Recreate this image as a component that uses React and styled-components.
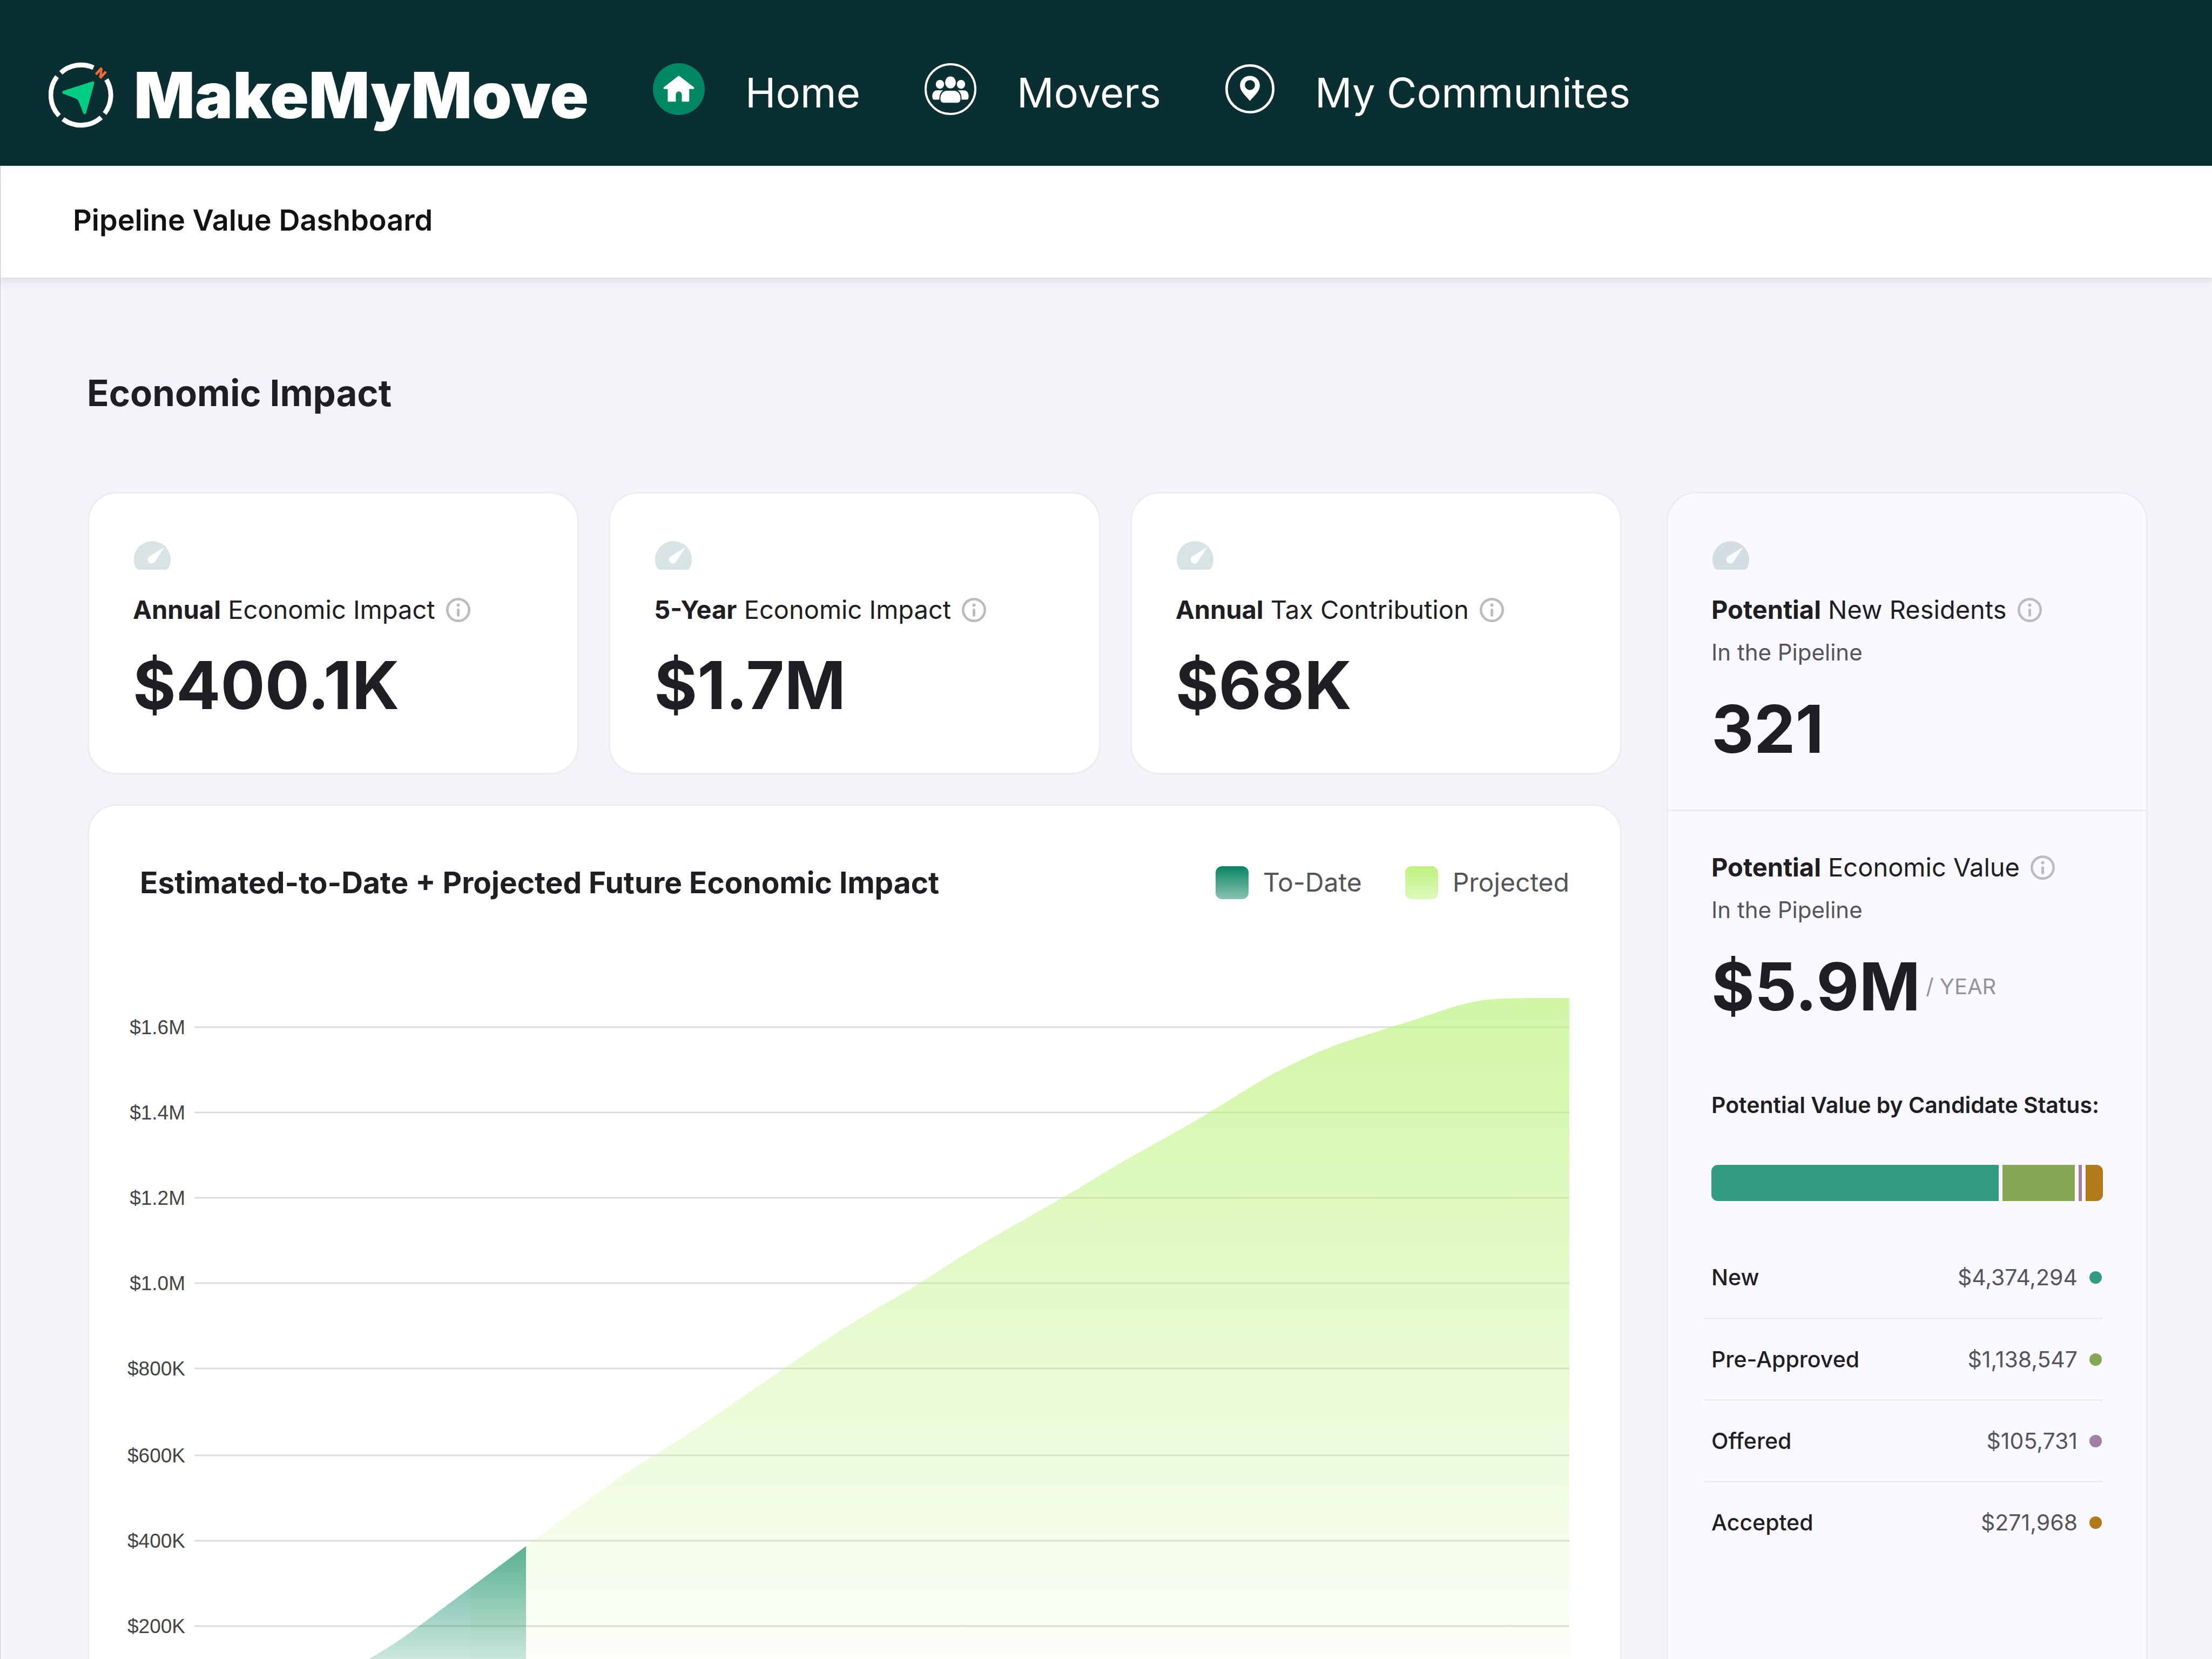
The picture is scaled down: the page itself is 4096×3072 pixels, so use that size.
import React from 'react'
import styled, { createGlobalStyle } from 'styled-components'

const stats = [
  { lead: 'Annual', label: 'Economic Impact', value: '$400.1K' },
  { lead: '5-Year', label: 'Economic Impact', value: '$1.7M' },
  { lead: 'Annual', label: 'Tax Contribution', value: '$68K' },
]

const statuses = [
  { name: 'New', value: '$4,374,294', color: '#329c82', share: 532 },
  { name: 'Pre-Approved', value: '$1,138,547', color: '#86a757', share: 134 },
  { name: 'Offered', value: '$105,731', color: '#a27fa4', share: 6 },
  { name: 'Accepted', value: '$271,968', color: '#b07a18', share: 32 },
]

const ticks = [
  { label: '$1.6M', y: 102 },
  { label: '$1.4M', y: 260 },
  { label: '$1.2M', y: 418 },
  { label: '$1.0M', y: 576 },
  { label: '$800K', y: 734 },
  { label: '$600K', y: 895 },
  { label: '$400K', y: 1053 },
  { label: '$200K', y: 1211 },
]

const LogoMark = () => (
  <LogoSvg viewBox="52 76 546 554" aria-hidden="true">
    <g fill="none" stroke="#fff" strokeWidth="40">
      <path d="M155 165A254 254 0 0 1 430 122" />
      <path d="M539 222A254 254 0 0 1 524 508" />
      <path d="M495 542A254 254 0 0 1 173 556" />
      <path d="M140 527A254 254 0 0 1 123 198" />
    </g>
    <path
      fill="#00ce84"
      d="M420 239L175 318Q160 328 172 341L282 383Q297 389 304 403L344 507Q355 523 367 507L437 252Q439 235 420 239Z"
    />
    <text
      x="491"
      y="204"
      fontFamily="Inter, sans-serif"
      fontSize="100"
      fontWeight="900"
      textAnchor="middle"
      fill="#ff6a35"
      transform="rotate(42 491 168)"
    >
      N
    </text>
  </LogoSvg>
)

const HomeIcon = () => (
  <NavSvg viewBox="0 0 147 147" aria-hidden="true">
    <circle cx="73.5" cy="73.5" r="73.5" fill="#008763" />
    <path
      fill="#fff"
      d="M71 37Q73.500 35 76 37L116 68Q119 73 114 73H103V107Q103 109 101 109H82V89A8.500 9 0 0 0 65 89V109H44Q42 109 42 107V73H33Q28 73 31 68Z"
    />
  </NavSvg>
)

const MoversIcon = () => (
  <NavSvg viewBox="0 0 147 147" aria-hidden="true">
    <circle cx="73.5" cy="73.5" r="70.5" fill="none" stroke="#fff" strokeWidth="6" />
    <g fill="#fff">
      <ellipse cx="73.5" cy="54.700" rx="15.300" ry="17" />
      <ellipse cx="43.600" cy="60" rx="11.800" ry="12.700" />
      <ellipse cx="103.400" cy="60" rx="11.800" ry="12.700" />
      <path d="M64 78H83C95 78 102 88 102 100C102 108 99 112 93 112H54C48 112 45 108 45 100C45 88 52 78 64 78Z" />
      <path d="M36 77H53C45 82 42 91 42 103.500H28C24 103.500 22 100 22 94C22 84 27 77 36 77Z" />
      <path d="M111 77H94C102 82 105 91 105 103.500H119C123 103.500 125 100 125 94C125 84 120 77 111 77Z" />
    </g>
  </NavSvg>
)

const PinIcon = () => (
  <PinSvg viewBox="0 0 139 139" aria-hidden="true">
    <circle cx="69.5" cy="69.5" r="66" fill="none" stroke="#fff" strokeWidth="7" />
    <path
      fill="#fff"
      fillRule="evenodd"
      d="M69.500 33C85 33 97.500 44 97.500 60C97.500 77 83 87 69.500 104C56 87 41.500 77 41.500 60C41.500 44 54 33 69.500 33ZM69.500 44.500A14.200 14.200 0 1 0 69.500 73A14.200 14.200 0 1 0 69.500 44.500Z"
    />
  </PinSvg>
)

const Gauge = ({ color }) => (
  <GaugeSvg viewBox="0 0 103 80" aria-hidden="true">
    <path
      fill={color}
      fillRule="evenodd"
      d="M15 80Q9 80 6.200 76A51.500 51.500 0 1 1 96.800 76Q94 80 88 80ZM86 16.500L43 43A11 11 0 1 0 60 56Z"
    />
  </GaugeSvg>
)

const Info = () => (
  <InfoButton type="button" aria-label="More info">
    <svg viewBox="0 0 68 68" aria-hidden="true">
      <circle cx="34" cy="34" r="30.5" fill="none" stroke="#bcbbc0" strokeWidth="7" />
      <circle cx="34" cy="20.5" r="4.500" fill="#bcbbc0" />
      <path d="M34 34V49" stroke="#bcbbc0" strokeWidth="7.500" strokeLinecap="round" />
    </svg>
  </InfoButton>
)

const Label = ({ lead, children }) => (
  <LabelRow>
    <span>
      <b>{lead}</b> {children}
    </span>
    <Info />
  </LabelRow>
)

const Chart = () => (
  <ChartSvg viewBox="0 0 2672 1380" role="img" aria-label="Economic impact">
    <defs>
      <linearGradient id="projected" gradientUnits="userSpaceOnUse" x1="0" y1="48" x2="0" y2="1369">
        <stop offset="0" stopColor="#bef280" stopOpacity="0.71" />
        <stop offset="1" stopColor="#bef280" stopOpacity="0" />
      </linearGradient>
      <linearGradient id="todate" gradientUnits="userSpaceOnUse" x1="0" y1="1063" x2="0" y2="1369">
        <stop offset="0" stopColor="#008661" stopOpacity="0.64" />
        <stop offset="1" stopColor="#008661" stopOpacity="0" />
      </linearGradient>
    </defs>
    {ticks.map((tick) => (
      <g key={tick.label}>
        <TickText x="108" y={tick.y + 13} textAnchor="end">
          {tick.label}
        </TickText>
        <path d={`M125 ${tick.y}H2671`} stroke="#dcdcdc" strokeWidth="3" />
      </g>
    ))}
    <path
      fill="url(#projected)"
      d="M636 1140L739 1063L872 965C900 944 922 928 945 914C985 889 1015 872 1055 845L1217 734C1262 703 1285 687 1332 657C1380 627 1415 609 1466 577C1510 549 1545 526 1594 497C1645 467 1685 445 1734 417C1780 391 1810 370 1860 342C1910 314 1955 290 2004 260C2062 226 2100 197 2174 163C2205 148 2225 140 2256 129L2340 102C2375 92 2400 83 2430 73C2470 60 2490 54 2530 50C2560 48 2590 48 2671 48V1369H636Z"
    />
    <path
      fill="url(#todate)"
      d="M300 1369C380 1310 420 1288 450 1271C490 1248 515 1230 541 1211L636 1140L739 1063V1369Z"
    />
  </ChartSvg>
)

const App = () => {
  return (
    <Page>
      <GlobalStyle />
      <Header>
        <Logo href="#">
          <LogoMark />
          <Wordmark>MakeMyMove</Wordmark>
        </Logo>
        <Nav>
          <NavLink href="#">
            <HomeIcon />
            <NavText>Home</NavText>
          </NavLink>
          <NavLink href="#">
            <MoversIcon />
            <NavText>Movers</NavText>
          </NavLink>
          <NavLink href="#">
            <PinIcon />
            <NavText>My Communites</NavText>
          </NavLink>
        </Nav>
      </Header>
      <Body>
        <SubBar>
          <SubTitle>Pipeline Value Dashboard</SubTitle>
        </SubBar>
        <Heading>Economic Impact</Heading>
        <Content>
          <Main>
            <StatGrid>
              {stats.map((stat) => (
                <StatCard key={stat.value}>
                  <Gauge color="#d8e3e3" />
                  <Label lead={stat.lead}>{stat.label}</Label>
                  <Value>{stat.value}</Value>
                </StatCard>
              ))}
            </StatGrid>
            <ChartCard>
              <ChartHead>
                <ChartTitle>Estimated-to-Date + Projected Future Economic Impact</ChartTitle>
                <Legend>
                  <LegendItem>
                    <Swatch $from="#068562" $to="#8cc3b1" />
                    To-Date
                  </LegendItem>
                  <LegendItem>
                    <Swatch $from="#bdf27c" $to="#def8be" />
                    Projected
                  </LegendItem>
                </Legend>
              </ChartHead>
              <Chart />
            </ChartCard>
          </Main>
          <Side>
            <SideTop>
              <Gauge color="#d2dee3" />
              <Label lead="Potential">New Residents</Label>
              <Sub>In the Pipeline</Sub>
              <SideValue>321</SideValue>
            </SideTop>
            <SideBottom>
              <Label lead="Potential">Economic Value</Label>
              <Sub>In the Pipeline</Sub>
              <SideValue>
                $5.9M <Unit>/ YEAR</Unit>
              </SideValue>
              <StatusTitle>Potential Value by Candidate Status:</StatusTitle>
              <Bar>
                {statuses.map((status) => (
                  <Segment key={status.name} $color={status.color} $share={status.share} />
                ))}
              </Bar>
              <StatusTable>
                <tbody>
                  {statuses.map((status) => (
                    <StatusRow key={status.name}>
                      <th scope="row">{status.name}</th>
                      <td>
                        {status.value}
                        <Dot $color={status.color} />
                      </td>
                    </StatusRow>
                  ))}
                </tbody>
              </StatusTable>
            </SideBottom>
          </Side>
        </Content>
      </Body>
    </Page>
  )
}

export default App

const GlobalStyle = createGlobalStyle`
  * {
    box-sizing: border-box;
  }
  body {
    margin: 0;
    font-family: Inter, "Liberation Sans", sans-serif;
    color: #1f1e23;
    background: #f4f3f8;
  }
  h1, h2, h3, p {
    margin: 0;
  }
`

const Page = styled.div`
  display: flex;
  flex-direction: column;
  height: 100vh;
  overflow: hidden;
`

const Header = styled.header`
  display: flex;
  align-items: center;
  flex: none;
  gap: 119px;
  height: 307px;
  padding: 22px 90px 0;
  background: #0a2f32;
`

const Logo = styled.a`
  display: flex;
  align-items: center;
  gap: 38px;
  margin-top: 22px;
  color: #fff;
  text-decoration: none;
`

const LogoSvg = styled.svg`
  width: 120px;
  height: 122px;
`

const Wordmark = styled.span`
  font-size: 118px;
  font-weight: 900;
  line-height: 120px;
`

const Nav = styled.nav`
  display: flex;
  align-items: center;
  gap: 119px;
`

const NavLink = styled.a`
  display: flex;
  align-items: center;
  gap: 75px;
  color: #fff;
  text-decoration: none;
`

const NavSvg = styled.svg`
  width: 96px;
  height: 96px;
`

const PinSvg = styled(NavSvg)`
  width: 91px;
  height: 91px;
`

const NavText = styled.span`
  padding-top: 12px;
  font-size: 76px;
  font-weight: 400;
  line-height: 96px;
`

const Body = styled.div`
  flex: 1;
  min-height: 0;
  border-left: 1px solid #c4c8cb;
`

const SubBar = styled.div`
  display: flex;
  align-items: center;
  height: 207px;
  padding: 0 134px 6px;
  background: #fff;
  box-shadow: 0 4px 16px rgba(20, 20, 40, 0.14);
`

const SubTitle = styled.h1`
  font-size: 54px;
  font-weight: 600;
  line-height: 64px;
  color: #111;
`

const Heading = styled.h2`
  padding: 172px 160px 141px;
  font-size: 67px;
  font-weight: 700;
  line-height: 84px;
`

const Content = styled.div`
  display: grid;
  grid-template-columns: minmax(0, 1fr) 891px;
  gap: 83px;
  padding: 0 119px 0 161px;
`

const Main = styled.main`
  display: flex;
  flex-direction: column;
  gap: 55px;
`

const StatGrid = styled.div`
  display: grid;
  grid-template-columns: repeat(3, 1fr);
  gap: 55px;
`

const Card = styled.section`
  background: #fff;
  border: 3px solid #edecf1;
  border-radius: 54px;
`

const StatCard = styled(Card)`
  padding: 88px 81px;
`

const GaugeSvg = styled.svg`
  display: block;
  width: 68px;
  height: 53px;
  margin-bottom: 44px;
  margin-left: 2px;
`

const LabelRow = styled.div`
  display: flex;
  align-items: center;
  gap: 20px;
  font-size: 47px;
  line-height: 60px;
  white-space: nowrap;
`

const InfoButton = styled.button`
  display: block;
  width: 45px;
  height: 45px;
  padding: 0;
  border: 0;
  background: none;

  svg {
    display: block;
  }
`

const Value = styled.p`
  margin-top: 36px;
  font-size: 122px;
  font-weight: 700;
  line-height: 148px;
`

const ChartCard = styled(Card)`
  padding-top: 110px;
`

const ChartHead = styled.div`
  display: flex;
  align-items: center;
  justify-content: space-between;
  padding: 0 94px;
`

const ChartTitle = styled.h3`
  font-size: 55px;
  font-weight: 700;
  line-height: 64px;
`

const Legend = styled.div`
  display: flex;
  gap: 80px;
`

const LegendItem = styled.div`
  display: flex;
  align-items: center;
  gap: 27px;
  font-size: 48px;
  line-height: 60px;
  color: #55545a;
`

const Swatch = styled.span`
  width: 61px;
  height: 61px;
  border-radius: 12px;
  background: linear-gradient(${(p) => p.$from}, ${(p) => p.$to});
`

const ChartSvg = styled.svg`
  display: block;
  width: 100%;
  margin-top: 134px;
  padding: 0 93px 0 70px;
`

const TickText = styled.text`
  font-family: "Liberation Sans", Arial, sans-serif;
  font-size: 37px;
  fill: #444;
`

const Side = styled.aside`
  border: 3px solid #edecf1;
  border-radius: 54px;
  background: #faf9ff;
`

const SideTop = styled.section`
  padding: 88px 80px 75px;
  border-bottom: 3px solid #edecf1;
`

const SideBottom = styled.section`
  padding: 74px 80px;
`

const Sub = styled.p`
  margin-top: 25px;
  font-size: 42px;
  line-height: 48px;
  color: #55545a;
`

const SideValue = styled(Value)`
  display: flex;
  align-items: center;
  gap: 10px;
  margin-top: 44px;
`

const Unit = styled.span`
  font-size: 40px;
  font-weight: 400;
  line-height: 48px;
  color: #949398;
`

const StatusTitle = styled.h3`
  margin-top: 121px;
  font-size: 41px;
  font-weight: 600;
  line-height: 48px;
`

const Bar = styled.div`
  display: flex;
  gap: 7px;
  height: 67px;
  margin-top: 87px;
  border-radius: 12px;
  overflow: hidden;
`

const Segment = styled.div`
  flex: ${(p) => p.$share} 1 0;
  background: ${(p) => p.$color};
`

const StatusTable = styled.table`
  width: calc(100% + 14px);
  margin: 66px 0 0 -14px;
  border-collapse: collapse;
  font-size: 41px;
  line-height: 48px;
`

const StatusRow = styled.tr`
  height: 151px;

  &:not(:last-child) {
    border-bottom: 3px solid #edecf1;
  }

  th {
    padding: 0 14px;
    font-weight: 500;
    text-align: left;
  }

  td {
    padding: 0 2px 0 0;
    color: #55545a;
    text-align: right;
  }
`

const Dot = styled.span`
  display: inline-block;
  width: 23px;
  height: 23px;
  margin-left: 22px;
  border-radius: 50%;
  vertical-align: 3px;
  background: ${(p) => p.$color};
`
